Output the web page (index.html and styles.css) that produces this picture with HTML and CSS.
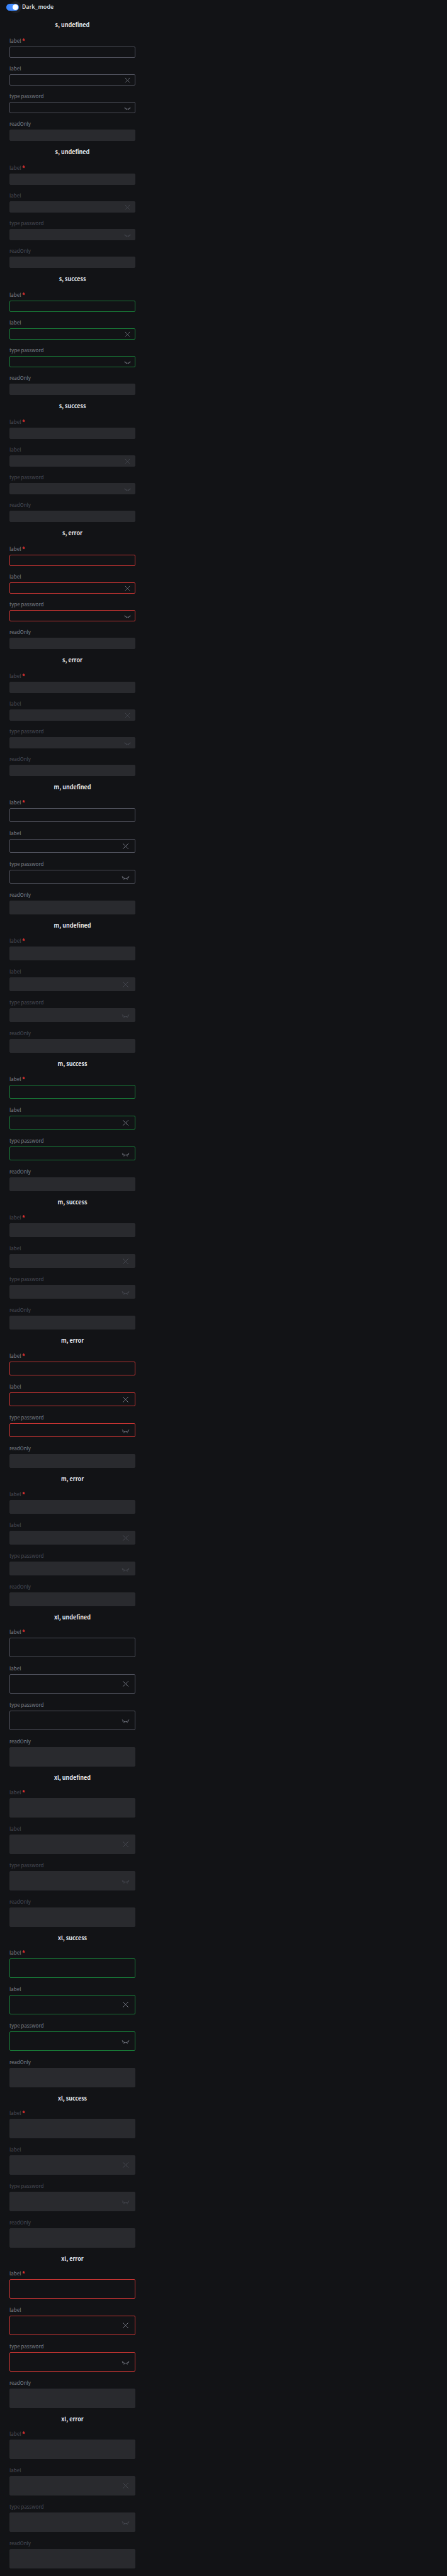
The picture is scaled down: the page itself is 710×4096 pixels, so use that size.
FILE: index.html
```html
<!DOCTYPE html>
<html lang="en">
<head>
<meta charset="utf-8">
<title>Input states</title>
<link rel="stylesheet" href="styles.css">
</head>
<body class="page">
<svg class="sprite" aria-hidden="true">
  <symbol id="icon-close" viewBox="0 0 24 24">
    <path d="M4 4l16 16M20 4L4 20"/>
  </symbol>
  <symbol id="icon-eye-closed" viewBox="0 0 24 24">
    <path d="M2 9.700C4.500 14 8 16 12 16s7.500-2 10-6.300M4.500 12.700L2 15M8 15.300l-1 4.400M16 15.300l1 4.400M19.500 12.700L22 15"/>
  </symbol>
</svg>
<header class="toolbar">
  <label class="switch">
    <input class="switch-input" type="checkbox" role="switch" checked>
    <span class="switch-text">Dark_mode</span>
  </label>
</header>
<main class="stories" id="stories"></main>
<script src="stories.js"></script>
</body>
</html>
```

FILE: styles.css
```css
.page {
  margin: 0;
  background: #121316;
  color: #e4e6ea;
  font-family: "Noto Sans CJK KR", "Noto Sans", sans-serif;
}

.sprite {
  display: none;
}

.toolbar {
  display: flex;
  height: 22px;
  padding-left: 10px;
}

.switch {
  display: flex;
  align-items: center;
  gap: 5px;
  font-size: 9px;
  line-height: 14px;
  font-weight: 500;
}

.switch-input {
  appearance: none;
  display: flex;
  align-items: center;
  justify-content: flex-end;
  width: 20px;
  height: 11px;
  margin: 0;
  padding: 1px;
  box-sizing: border-box;
  border-radius: 6px;
  background: #3a86ff;
}

.switch-input::before {
  content: "";
  width: 9px;
  height: 9px;
  border-radius: 50%;
  background: #fff;
  box-shadow: 0 0 0 5px rgb(255 255 255 / 6%);
}

.switch-input:not(:checked) {
  justify-content: flex-start;
  background: #585a66;
}

.stories {
  padding: 0 15px 12px;
}

.story {
  width: min(200px, 100%);
  padding-top: 11px;
}

.story-title {
  margin: 0;
  font-size: 9px;
  line-height: 14px;
  font-weight: 700;
  text-align: center;
}

.fields {
  display: flex;
  flex-direction: column;
}

.field {
  display: flex;
  flex-direction: column;
  gap: 3px;
}

.label {
  color: #7d828c;
  font-size: 8px;
  line-height: 12px;
}

.required {
  color: #f03535;
  font-family: "Noto Sans", sans-serif;
  font-weight: 700;
  line-height: 1;
}

.control {
  display: flex;
  align-items: center;
  box-sizing: border-box;
  border: 1px solid #50525d;
  border-radius: 2px;
}

.input {
  flex: 1;
  min-width: 0;
  height: 100%;
  padding: 0 6px;
  box-sizing: border-box;
  border: 0;
  outline: 0;
  background: none;
  color: inherit;
  font: inherit;
  font-size: 8px;
}

.icon-button {
  display: flex;
  padding: 0;
  border: 0;
  background: none;
  color: #858995;
}

.icon {
  width: 100%;
  height: 100%;
  fill: none;
  stroke: currentColor;
  stroke-width: 1.600;
}

.story-s .story-title { margin-bottom: 12px; }
.story-s .fields { gap: 11px; }
.story-s .control { height: 18px; }
.story-s .icon-button { width: 11px; height: 11px; margin-right: 6px; }

.story-m .story-title { margin-bottom: 11px; }
.story-m .fields { gap: 12px; }
.story-m .control { height: 22px; }
.story-m .icon-button { width: 13px; height: 13px; margin-right: 8px; }

.story-xl .story-title { margin-bottom: 10px; }
.story-xl .fields { gap: 12px; }
.story-xl .control { height: 31px; }
.story-xl .icon-button { width: 13px; height: 13px; margin-right: 8px; }

.story-success .control { border-color: #188039; }
.story-error .control { border-color: #cc3533; }

.story .control-filled {
  border-color: #292a2e;
  background: #292a2e;
}

.story-disabled .label,
.story-disabled .icon-button {
  color: #4a4d56;
}

.story-disabled .required {
  color: #f03535;
}
```

FILE: stories.js
```js
const sizes = ["s", "m", "xl"];
const statuses = ["undefined", "success", "error"];
const fields = [
  { label: "label", required: true },
  { label: "label", icon: "close", action: "Clear" },
  { label: "type password", type: "password", icon: "eye-closed", action: "Show password" },
  { label: "readOnly", readOnly: true },
];

function renderField(field, id, disabled) {
  const off = disabled ? " disabled" : "";
  const filled = disabled || field.readOnly ? " control-filled" : "";
  const mark = field.required ? ' <span class="required">*</span>' : "";
  const button = field.icon
    ? `<button class="icon-button" type="button" aria-label="${field.action}"${off}>
         <svg class="icon"><use href="#icon-${field.icon}"/></svg>
       </button>`
    : "";
  return `<div class="field">
    <label class="label" for="${id}">${field.label}${mark}</label>
    <div class="control${filled}">
      <input class="input" id="${id}" type="${field.type || "text"}"${field.readOnly ? " readonly" : ""}${off}>
      ${button}
    </div>
  </div>`;
}

function renderStory(size, status, disabled) {
  const prefix = `${size}-${status}${disabled ? "-disabled" : ""}`;
  return `<section class="story story-${size} story-${status}${disabled ? " story-disabled" : ""}">
    <h2 class="story-title">${size}, ${status}</h2>
    <div class="fields">
      ${fields.map((field, i) => renderField(field, `${prefix}-${i}`, disabled)).join("")}
    </div>
  </section>`;
}

document.getElementById("stories").innerHTML = sizes
  .flatMap((size) => statuses.flatMap((status) =>
    [false, true].map((disabled) => renderStory(size, status, disabled))))
  .join("");
```
